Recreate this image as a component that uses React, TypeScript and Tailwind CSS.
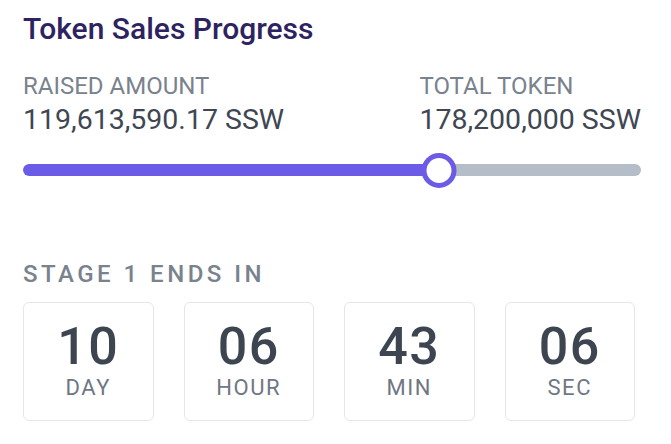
import React from "react";

const UNITS = [
  { value: "10", label: "DAY" },
  { value: "06", label: "HOUR" },
  { value: "43", label: "MIN" },
  { value: "06", label: "SEC" },
];

export default function App() {
  const pct = 67.3;
  return (
    <div className="min-h-screen bg-white" style={{ fontFamily: "Roboto, 'Liberation Sans', sans-serif" }}>
      <main className="w-[641px] pl-[23px] pt-[11px]">
        <h1 className="text-[30px] font-medium leading-[36px] text-[#2c2360]">Token Sales Progress</h1>

        <div className="mt-[25px] flex justify-between">
          <div>
            <p className="text-[24px] leading-[28px] text-[#7a828e]">RAISED AMOUNT</p>
            <p className="mt-[3px] text-[28.5px] leading-[34px] text-[#3f4752]">119,613,590.17 SSW</p>
          </div>
          <div>
            <p className="text-[24px] leading-[28px] text-[#7a828e]">TOTAL TOKEN</p>
            <p className="mt-[3px] text-[28.5px] leading-[34px] text-[#3f4752]">178,200,000 SSW</p>
          </div>
        </div>

        <div className="relative mt-[15px] flex h-[36px] items-center">
          <div className="h-[12px] w-full overflow-hidden rounded-full bg-[#b5bdc8]">
            <div className="h-full rounded-l-full bg-[#6b5be6]" style={{ width: `${pct}%` }} />
          </div>
          <div
            className="absolute top-[0.5px] h-[35px] w-[35px] -translate-x-1/2 rounded-full border-[5px] border-[#6b5be6] bg-white"
            style={{ left: `${pct}%` }}
          />
        </div>

        <p className="mt-[72px] text-[24px] font-medium leading-[28px] tracking-[0.145em] text-[#7a828e]">STAGE 1 ENDS IN</p>

        <div className="mt-[14px] grid w-[612px] grid-cols-4 gap-[30px]">
          {UNITS.map((u) => (
            <div
              key={u.label}
              className="flex h-[119px] flex-col items-center rounded-[6px] border border-[#e3e7eb] bg-white pt-[16px]"
            >
              <span className="text-[52px] font-medium leading-[56px] tracking-[0.03em] text-[#3d4551]">{u.value}</span>
              <span className="text-[22px] leading-[26px] tracking-[0.07em] text-[#6f7783]">{u.label}</span>
            </div>
          ))}
        </div>
      </main>
    </div>
  );
}
